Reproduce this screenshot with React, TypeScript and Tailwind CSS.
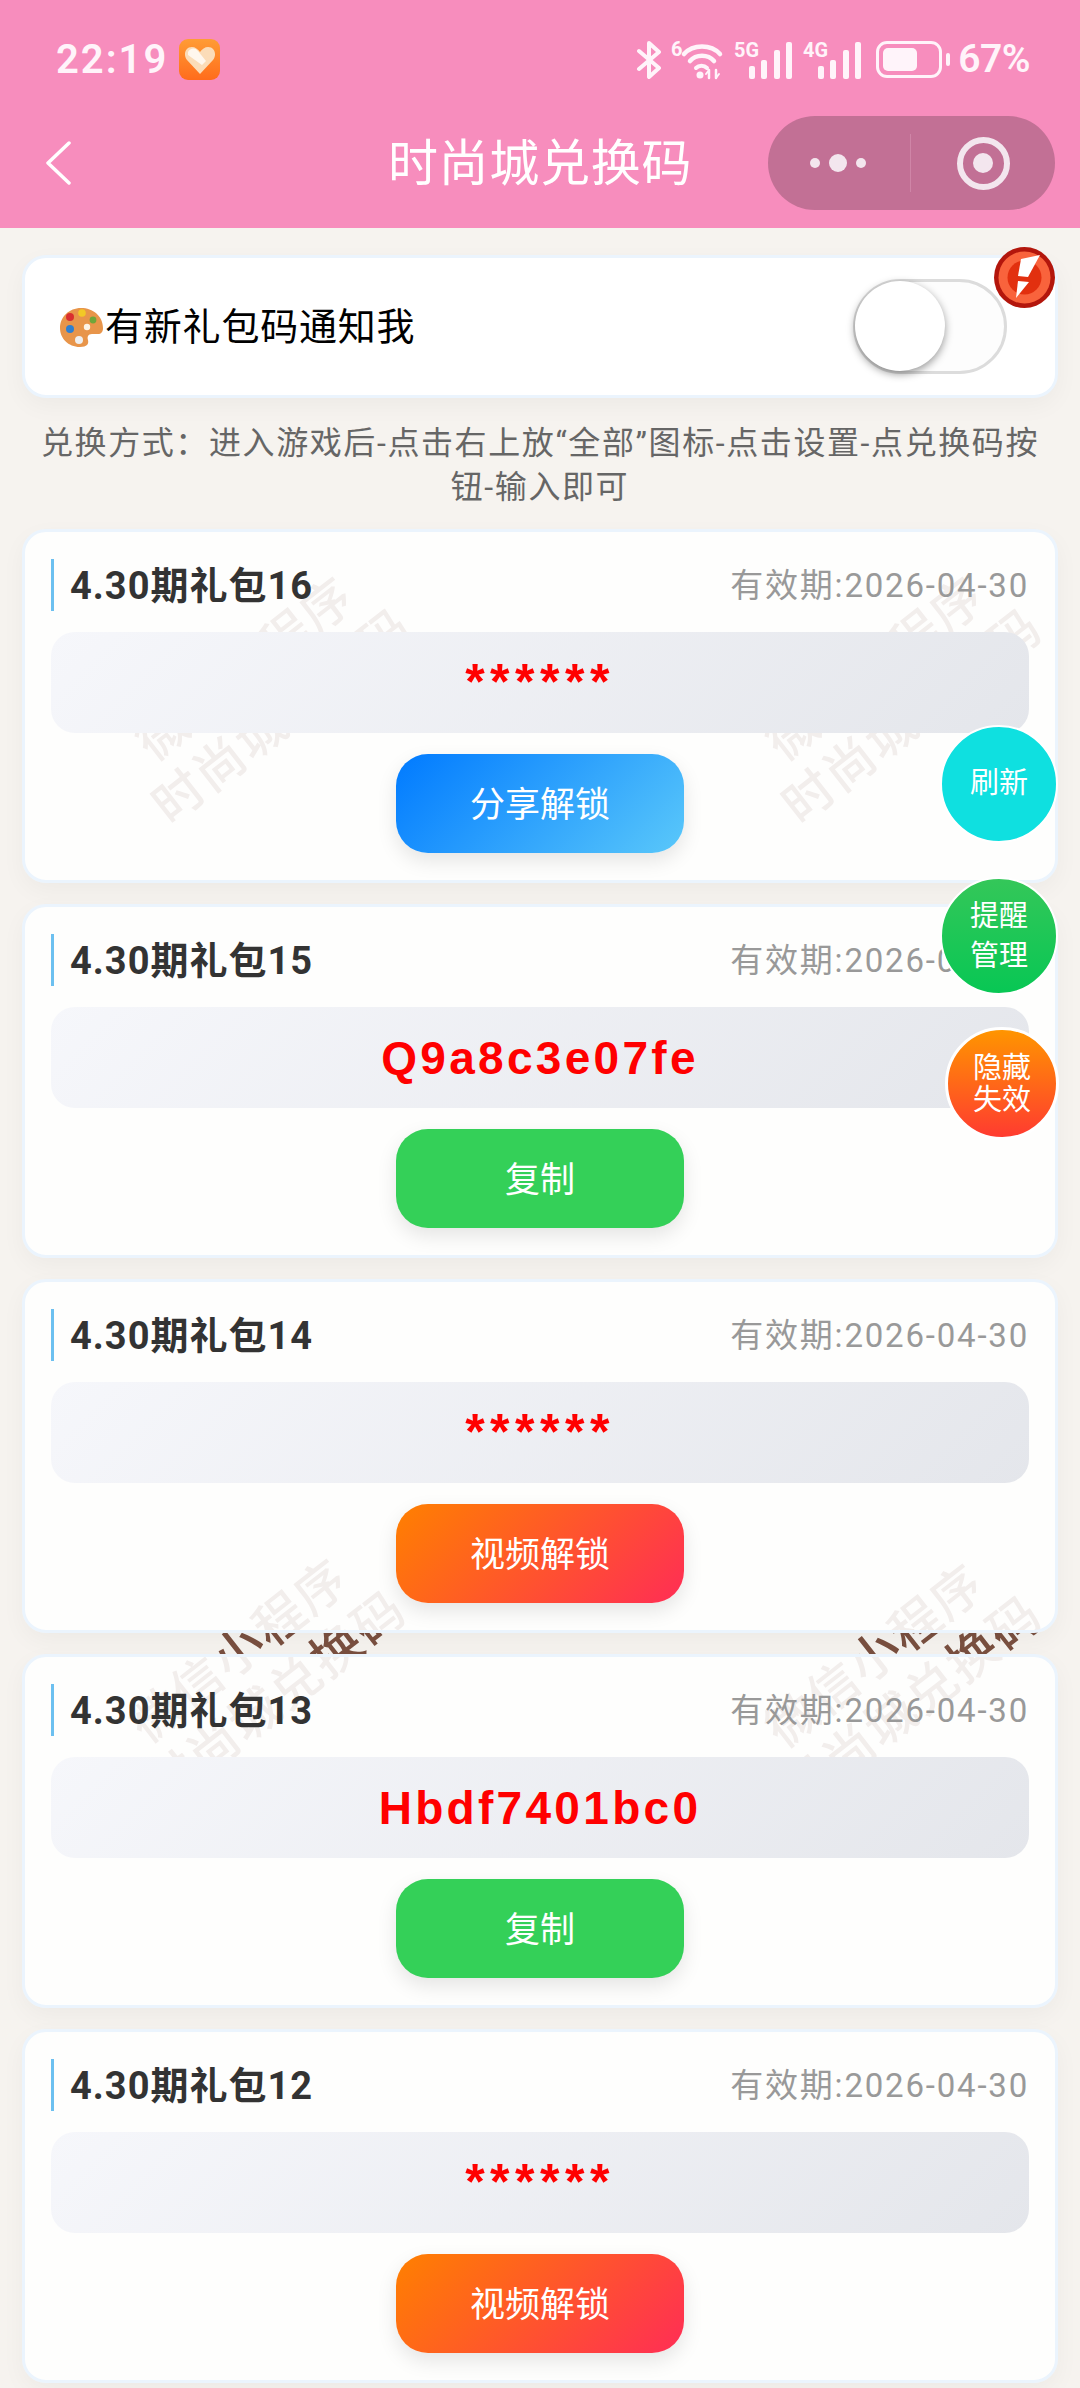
// Redeem code list page
type Gift = {
  name: string;
  code: string;
  action: "share" | "video" | "copy";
};

const gifts: Gift[] = [
  { name: "4.30期礼包16", code: "******", action: "share" },
  { name: "4.30期礼包15", code: "Q9a8c3e07fe", action: "copy" },
  { name: "4.30期礼包14", code: "******", action: "video" },
  { name: "4.30期礼包13", code: "Hbdf7401bc0", action: "copy" },
  { name: "4.30期礼包12", code: "******", action: "video" },
];

const actions = {
  share: {
    label: "分享解锁",
    className: "bg-[linear-gradient(135deg,#007aff,#5ac8fa)]",
  },
  video: {
    label: "视频解锁",
    className: "bg-[linear-gradient(135deg,#ff8000,#ff2d55)]",
  },
  copy: {
    label: "复制",
    className: "bg-[#34d058]",
  },
};

const Signal = ({ label }: { label: string }) => (
  <svg className="overflow-visible" width="58" height="40" viewBox="0 0 58 40" fill="#fff4fa">
    <text x="0" y="17" fontSize="20" fontWeight="700" fontFamily="Roboto" textLength="25" lengthAdjust="spacingAndGlyphs">
      {label}
    </text>
    <rect x="15" y="26" width="6" height="13" rx="2" />
    <rect x="27" y="20" width="6" height="19" rx="2" />
    <rect x="40" y="10" width="6" height="29" rx="2" />
    <rect x="52" y="2" width="6" height="37" rx="2" />
  </svg>
);

const StatusIcons = () => (
  <div className="flex items-center text-[#fff4fa]">
    <svg width="26" height="38" viewBox="0 0 26 38" fill="none" stroke="#fff4fa" strokeWidth="4" strokeLinejoin="round" strokeLinecap="round">
      <path d="M3 10l20 17-10 9V2l10 9L3 28" />
    </svg>
    <svg className="ml-[9px] overflow-visible" width="52" height="40" viewBox="0 0 52 40" fill="none" stroke="#fff4fa" strokeLinecap="round">
      <text x="0" y="16" fontSize="20" fontWeight="700" fontFamily="Roboto" fill="#fff4fa" stroke="none">6</text>
      <path d="M13 14C22 4 40 4 49 14" strokeWidth="4.5" />
      <path d="M19 21C25 14 37 14 43 21" strokeWidth="4.5" />
      <path d="M25 28C28 25 33 25 36 28" strokeWidth="4" />
      <circle cx="29" cy="35" r="3.5" fill="#fff4fa" stroke="none" />
      <path d="M38 30v8M45 30v8" strokeWidth="2.5" />
      <path d="M35 34l3-4M45 38l3-4" strokeWidth="2" />
    </svg>
    <div className="ml-[11px]">
      <Signal label="5G" />
    </div>
    <div className="ml-[11px]">
      <Signal label="4G" />
    </div>
    <div className="ml-[15px] flex items-center">
      <div className="flex h-[37px] w-[66px] items-center rounded-[11px] border-[3px] border-[#fff4fa] p-[4px]">
        <div className="h-full w-[34px] rounded-[5px] bg-[#fff4fa]" />
      </div>
      <div className="ml-[4px] h-[13px] w-[4px] rounded-full bg-[#fff4fa]" />
    </div>
    <span className="ml-[8px] text-[39px] leading-none font-semibold tracking-[-0.5px]">67%</span>
  </div>
);

const Header = () => (
  <header className="flex h-[228px] flex-col bg-[#f78dbd]">
    <div className="mt-[39px] flex h-[41px] items-center justify-between pr-[50px] pl-[56px]">
      <div className="flex items-center text-[#fff4fa]">
        <span className="text-[40px] leading-none font-semibold tracking-[2px]">22:19</span>
        <div className="ml-[11px] flex h-[41px] w-[41px] items-center justify-center rounded-[9px] bg-[linear-gradient(180deg,#ff9c35,#ff6c1c)]">
          <svg width="32" height="28" viewBox="0 0 32 28">
            <path d="M16 28L3 14C-1 9 1 1 8 1c3 0 6 2 8 5 2-3 5-5 8-5 7 0 9 8 5 13z" fill="#fbdcb8" />
            <path d="M4 6c2-4 7-5 10-1l8 10-4 4L4 9z" fill="#fff7ee" />
          </svg>
        </div>
      </div>
      <StatusIcons />
    </div>
    <div className="mt-[36px] grid h-[94px] grid-cols-[1fr_auto_1fr] items-center px-[25px]">
      <svg className="ml-[20px]" width="26" height="44" viewBox="0 0 26 44" fill="none" stroke="#fff" strokeWidth="3.5" strokeLinecap="round" strokeLinejoin="round">
        <path d="M24 2L3 22l21 20" />
      </svg>
      <h1 className="pt-[2px] text-[50px] leading-none font-normal tracking-[0.7px] text-white">时尚城兑换码</h1>
      <div className="flex justify-end">
        <div className="flex h-[94px] w-[287px] items-center rounded-full bg-[#c27095]">
          <div className="flex h-[58px] w-[143px] items-center justify-end gap-[9px] border-r border-[#cf85a7] pr-[44px]">
            <span className="h-[10px] w-[10px] rounded-full bg-[#f3e6ee]" />
            <span className="h-[18px] w-[18px] rounded-full bg-[#f3e6ee]" />
            <span className="h-[10px] w-[10px] rounded-full bg-[#f3e6ee]" />
          </div>
          <div className="flex flex-1 items-center justify-center">
            <div className="flex h-[53px] w-[53px] items-center justify-center rounded-full border-[6px] border-[#f3e6ee]">
              <span className="h-[20px] w-[20px] rounded-full bg-[#f3e6ee]" />
            </div>
          </div>
        </div>
      </div>
    </div>
  </header>
);

const Palette = () => (
  <svg width="43" height="40" viewBox="0 0 43 40">
    <path d="M21 1C9 1 0 10 0 21c0 10 8 19 20 19 7 0 9-3 8-7-1-3 0-6 4-6h6c3 0 5-2 5-6C43 9 33 1 21 1z" fill="#e8954a" />
    <circle cx="10" cy="10" r="4" fill="#d92f2f" />
    <circle cx="22" cy="6" r="3.8" fill="#f2c926" />
    <circle cx="33" cy="13" r="3.4" fill="#6fa63a" />
    <circle cx="10" cy="22" r="4" fill="#2f7fd0" />
    <circle cx="19" cy="33" r="4" fill="#efefef" />
    <circle cx="27" cy="20" r="3.2" fill="#fdf3e6" />
  </svg>
);

const NoticeCard = () => (
  <div className="relative flex h-[143px] items-center justify-between rounded-[24px] border-[3px] border-[#ebf4fd] bg-white pr-[48px] pl-[35px] shadow-[0_8px_24px_rgba(0,0,0,0.04)]">
    <div className="flex items-center text-[38px] leading-none text-black">
      <Palette />
      <span className="ml-[2px] tracking-[0.8px]">有新礼包码通知我</span>
    </div>
    <div className="relative h-[95px] w-[154px] rounded-full border-[3px] border-[#dcdcdc] bg-[#fdfdfd]">
      <div className="absolute -top-[1px] -left-[1px] h-[90px] w-[90px] rounded-full bg-white shadow-[0_3px_8px_rgba(0,0,0,0.4)]" />
    </div>
    <svg className="absolute -top-[11px] right-0" width="61" height="61" viewBox="0 0 61 61">
      <circle cx="30.5" cy="30.5" r="30.5" fill="#b3160c" />
      <circle cx="30.5" cy="30.5" r="26" fill="#f9633c" />
      <circle cx="30.5" cy="30.5" r="17" fill="#e2300f" />
      <path d="M27 12L46 8 34 30l-10-1z" fill="#fff" />
      <path d="M24 34l11 1-13 16z" fill="#fff" />
    </svg>
  </div>
);

const GiftCard = ({ gift }: { gift: Gift }) => {
  const action = actions[gift.action];
  const hidden = gift.code === "******";

  return (
    <div className="relative h-[354px] rounded-[24px] border-[3px] border-[#ebf4fd] bg-white/90 px-[26px] pt-[27px] shadow-[0_8px_24px_rgba(0,0,0,0.04)]">
      <div className="flex h-[52px] items-center justify-between">
        <div className="flex h-full items-center border-l-[3px] border-[#6cc0f0] pt-[2px] pl-[16px] text-[38px] leading-none font-bold tracking-[1px] text-[#333]">
          {gift.name}
        </div>
        <div className="text-[33px] leading-none tracking-[1.8px] text-[#999]">有效期:2026-04-30</div>
      </div>
      <div className="mt-[21px] flex h-[101px] items-center justify-center rounded-[24px] bg-[linear-gradient(135deg,#f6f7fb,#e4e6eb)]">
        <span
          className={
            hidden
              ? "mb-[2px] font-['Liberation_Sans',sans-serif] text-[50px] leading-none font-bold tracking-[5.5px] text-[#ff0000]"
              : "font-['Liberation_Sans',sans-serif] text-[46px] leading-none font-bold tracking-[3.3px] text-[#ff0000]"
          }
        >
          {gift.code}
        </span>
      </div>
      <div className="mt-[21px] flex justify-center">
        <button
          className={`flex h-[99px] w-[288px] items-center justify-center rounded-[32px] pt-[3px] text-[35px] leading-none text-white shadow-[0_8px_20px_rgba(0,0,0,0.1)] ${action.className}`}
        >
          {action.label}
        </button>
      </div>
    </div>
  );
};

const Watermark = ({ className }: { className: string }) => (
  <div
    className={`absolute flex h-[120px] w-[400px] -rotate-[38deg] flex-col items-center justify-center text-[50px] leading-[60px] font-medium tracking-[2px] whitespace-nowrap text-[#7a5040] ${className}`}
  >
    <span>微信小程序</span>
    <span>时尚城兑换码</span>
  </div>
);

const FloatButton = ({ className, children }: { className: string; children: React.ReactNode }) => (
  <button
    className={`absolute flex flex-col items-center justify-center rounded-full border-white text-center text-[29px] text-white ${className}`}
  >
    {children}
  </button>
);

export default function App() {
  return (
    <div className="relative h-[2388px] w-[1080px] overflow-hidden bg-[#f6f3ef] font-[Roboto,'Noto_Sans_CJK_SC',sans-serif]">
      <Watermark className="top-[633px] left-[64px]" />
      <Watermark className="top-[633px] left-[694px]" />
      <Watermark className="top-[1615px] left-[58px]" />
      <Watermark className="top-[1620px] left-[694px]" />

      <div className="relative">
        <Header />
        <main className="px-[22px] pt-[27px]">
          <NoticeCard />
          <p className="px-[14px] pt-[23px] pb-[20px] text-center text-[32px] leading-[44px] tracking-[1.6px] text-[#666]">
            兑换方式：进入游戏后-点击右上放“全部”图标-点击设置-点兑换码按钮-输入即可
          </p>
          <div className="flex flex-col gap-[21px]">
            {gifts.map((gift) => (
              <GiftCard key={gift.name} gift={gift} />
            ))}
          </div>
        </main>
      </div>

      <FloatButton className="top-[725px] left-[940px] h-[118px] w-[118px] border-[2px] bg-[#0fe0e0]">刷新</FloatButton>
      <FloatButton className="top-[877px] left-[940px] h-[118px] w-[118px] border-[2px] bg-[linear-gradient(180deg,#34c759,#08c754)] leading-[40px]">
        <span>提醒</span>
        <span>管理</span>
      </FloatButton>
      <FloatButton className="top-[1027px] left-[945px] h-[113px] w-[114px] border-[3px] bg-[linear-gradient(180deg,#ff9500,#ff3b30)] leading-[32px]">
        <span>隐藏</span>
        <span>失效</span>
      </FloatButton>
    </div>
  );
}
